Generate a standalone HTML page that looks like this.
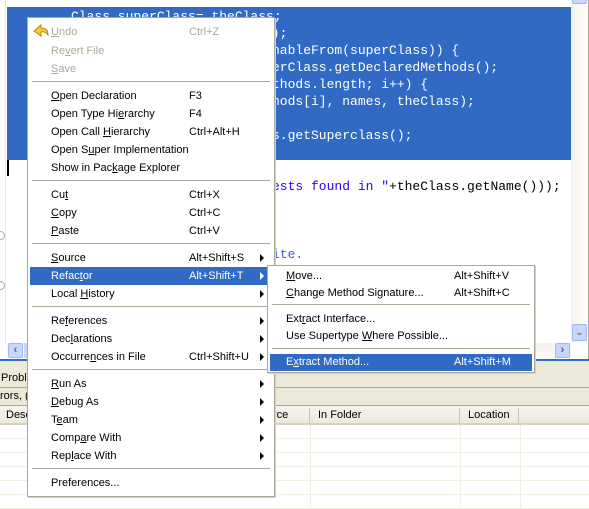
<!DOCTYPE html>
<html><head><meta charset="utf-8"><style>
*{margin:0;padding:0;box-sizing:border-box}
body{width:589px;height:509px;overflow:hidden;background:#fff;position:relative;font-family:"Liberation Sans",sans-serif;font-size:11px;color:#000}
.a{position:absolute}
.code{position:absolute;font-family:"Liberation Mono",monospace;font-size:13px;white-space:pre;line-height:17px}
.menu{position:absolute;background:#fff;border:1px solid #aca899;box-shadow:1px 1px 0 #d4d0c8}
.it{position:absolute;left:0;right:0;height:18px;line-height:18px}
.it .t{position:absolute;left:23px}
.it .k{position:absolute;left:161px}
.it .ar{position:absolute;left:232px;top:5px;width:0;height:0;border-top:4px solid transparent;border-bottom:4px solid transparent;border-left:4px solid #000}
.sep{position:absolute;left:4px;right:4px;height:2px;border-top:1px solid #aca899;border-bottom:1px solid #fff}
.dis{color:#aca899}
.hl{background:#316ac5;color:#fff}
.hl .ar{border-left-color:#fff}
u{text-decoration:underline}
.sub .it{height:17px;line-height:17px}
.sub .it .t{left:18px}
.sub .it .k{left:186px}
</style></head><body>
<div class="a" style="left:0;top:0;width:6px;height:343px;background:#fff;border-right:1px solid #ece9d8"></div>
<div class="a" style="left:7px;top:7px;width:564px;height:153px;background:#316ac5"></div>
<div class="a" style="left:7px;top:160px;width:2px;height:16px;background:#000"></div>
<div class="a" style="left:-4px;top:231px;width:9px;height:9px;border:1px solid #9aa9c4;border-radius:50%"></div>
<div class="a" style="left:-4px;top:281px;width:9px;height:9px;border:1px solid #9aa9c4;border-radius:50%"></div>
<div class="code" style="left:71px;top:8px;color:#fff">Class superClass= theClass;</div>
<div class="code" style="left:264px;top:25px;color:#fff">();</div>
<div class="code" style="left:272px;top:42px;color:#fff">nableFrom(superClass)) {</div>
<div class="code" style="left:272px;top:59px;color:#fff">erClass.getDeclaredMethods();</div>
<div class="code" style="left:272px;top:76px;color:#fff">thods.length; i++) {</div>
<div class="code" style="left:272px;top:93px;color:#fff">hods[i], names, theClass);</div>
<div class="code" style="left:272px;top:127px;color:#fff">s.getSuperclass();</div>
<div class="code" style="left:272px;top:178px"><span style="color:#2a00ff">ests found in "</span>+theClass.getName()));</div>
<div class="code" style="left:272px;top:246px;color:#3f5fbf">ite.</div>
<div class="a" style="left:571px;top:0;width:17px;height:343px;background:linear-gradient(90deg,#f3f1ea,#fdfdfb)"></div>
<div class="a" style="left:588px;top:0;width:1px;height:360px;background:#aca899"></div>
<div class="a" style="left:572px;top:-10px;width:15px;height:14px;background:#c8d6fb;border:1px solid #a4b9ef;border-radius:2px"></div>
<div class="a" style="left:572px;top:324px;width:15px;height:17px;background:#c8d6fb;border:1px solid #a4b9ef;border-radius:2px;color:#4d6185;font-size:10px;text-align:center;line-height:15px">&#8964;</div>
<div class="a" style="left:7px;top:343px;width:564px;height:16px;background:linear-gradient(#f3f1ea,#fdfdfb)"></div>
<div class="a" style="left:8px;top:343px;width:15px;height:15px;background:#c8d6fb;border:1px solid #a4b9ef;border-radius:2px;color:#4d6185;font-weight:bold;text-align:center;line-height:13px">&lsaquo;</div>
<div class="a" style="left:24px;top:343px;width:4px;height:15px;background:#c8d6fb"></div>
<div class="a" style="left:555px;top:343px;width:15px;height:15px;background:#c8d6fb;border:1px solid #a4b9ef;border-radius:2px;color:#4d6185;font-weight:bold;text-align:center;line-height:13px">&rsaquo;</div>
<div class="a" style="left:0;top:359px;width:589px;height:2px;background:#316ac5"></div>
<div class="a" style="left:0;top:361px;width:589px;height:45px;background:#ece9d8"></div>
<div class="a" style="left:0;top:387px;width:589px;height:1px;background:#aca899"></div>
<div class="a" style="left:0;top:405px;width:589px;height:1px;background:#aca899"></div>
<div class="a" style="left:1px;top:372px">Proble</div>
<div class="a" style="left:0;top:390px">rors, (</div>
<div class="a" style="left:0;top:406px;width:589px;height:19px;background:linear-gradient(#f5f4ee,#ebeadb);border-bottom:2px solid #d6d2c2"></div>
<div class="a" style="left:6px;top:409px">Desc</div>
<div class="a" style="left:273px;top:409px">rce</div>
<div class="a" style="left:318px;top:409px">In Folder</div>
<div class="a" style="left:468px;top:409px">Location</div>
<div class="a" style="left:309px;top:408px;width:1px;height:15px;background:#c7c5b2"></div>
<div class="a" style="left:459px;top:408px;width:1px;height:15px;background:#c7c5b2"></div>
<div class="a" style="left:518px;top:408px;width:1px;height:15px;background:#c7c5b2"></div>
<div class="a" style="left:0;top:425px;width:589px;height:84px;background:repeating-linear-gradient(#fff 0,#fff 13px,#f0efe6 13px,#f0efe6 14px)"></div>
<div class="a" style="left:310px;top:425px;width:1px;height:84px;background:#f0efe6"></div>
<div class="a" style="left:460px;top:425px;width:1px;height:84px;background:#f0efe6"></div>
<div class="a" style="left:520px;top:425px;width:1px;height:84px;background:#f0efe6"></div>
<div class="menu" style="left:27px;top:17px;width:248px;height:480px">
<svg class="a" style="left:4px;top:5px" width="18" height="16" viewBox="0 0 18 16"><path d="M2 8 L9 2 L9 5 Q16 5 16 12 Q13 8 9 9 L9 13 Z" fill="#f5c842" stroke="#b8860b" stroke-width="1"/></svg>
<div class="it dis" style="top:5px"><span class="t"><u>U</u>ndo</span><span class="k">Ctrl+Z</span></div>
<div class="it dis" style="top:24px"><span class="t">Re<u>v</u>ert File</span></div>
<div class="it dis" style="top:42px"><span class="t"><u>S</u>ave</span></div>
<div class="sep" style="top:63px"></div>
<div class="it" style="top:69px"><span class="t"><u>O</u>pen Declaration</span><span class="k">F3</span></div>
<div class="it" style="top:87px"><span class="t">Open Type Hi<u>e</u>rarchy</span><span class="k">F4</span></div>
<div class="it" style="top:105px"><span class="t">Open Call <u>H</u>ierarchy</span><span class="k">Ctrl+Alt+H</span></div>
<div class="it" style="top:123px"><span class="t">Open S<u>u</u>per Implementation</span></div>
<div class="it" style="top:141px"><span class="t">Show in Pac<u>k</u>age Explorer</span></div>
<div class="sep" style="top:162px"></div>
<div class="it" style="top:168px"><span class="t">Cu<u>t</u></span><span class="k">Ctrl+X</span></div>
<div class="it" style="top:186px"><span class="t"><u>C</u>opy</span><span class="k">Ctrl+C</span></div>
<div class="it" style="top:204px"><span class="t"><u>P</u>aste</span><span class="k">Ctrl+V</span></div>
<div class="sep" style="top:225px"></div>
<div class="it" style="top:231px"><span class="t"><u>S</u>ource</span><span class="k">Alt+Shift+S</span><span class="ar"></span></div>
<div class="it hl" style="top:249px;left:2px;right:4px"><span class="t" style="left:21px">Refac<u>t</u>or</span><span class="k" style="left:159px">Alt+Shift+T</span><span class="ar" style="left:230px"></span></div>
<div class="it" style="top:267px"><span class="t">Local <u>H</u>istory</span><span class="ar"></span></div>
<div class="sep" style="top:288px"></div>
<div class="it" style="top:294px"><span class="t">Re<u>f</u>erences</span><span class="ar"></span></div>
<div class="it" style="top:312px"><span class="t">Dec<u>l</u>arations</span><span class="ar"></span></div>
<div class="it" style="top:330px"><span class="t">Occurre<u>n</u>ces in File</span><span class="k">Ctrl+Shift+U</span><span class="ar"></span></div>
<div class="sep" style="top:351px"></div>
<div class="it" style="top:357px"><span class="t"><u>R</u>un As</span><span class="ar"></span></div>
<div class="it" style="top:375px"><span class="t"><u>D</u>ebug As</span><span class="ar"></span></div>
<div class="it" style="top:393px"><span class="t">T<u>e</u>am</span><span class="ar"></span></div>
<div class="it" style="top:411px"><span class="t">Comp<u>a</u>re With</span><span class="ar"></span></div>
<div class="it" style="top:429px"><span class="t">Rep<u>l</u>ace With</span><span class="ar"></span></div>
<div class="sep" style="top:450px"></div>
<div class="it" style="top:456px"><span class="t">Preferences...</span></div>
</div>
<div class="menu sub" style="left:267px;top:265px;width:268px;height:108px">
<div class="it" style="top:2px"><span class="t"><u>M</u>ove...</span><span class="k">Alt+Shift+V</span></div>
<div class="it" style="top:19px"><span class="t"><u>C</u>hange Method Signature...</span><span class="k">Alt+Shift+C</span></div>
<div class="sep" style="top:38px"></div>
<div class="it" style="top:45px"><span class="t">Ext<u>r</u>act Interface...</span></div>
<div class="it" style="top:62px"><span class="t">Use Supertype <u>W</u>here Possible...</span></div>
<div class="sep" style="top:82px"></div>
<div class="it hl" style="top:88px;left:2px;right:2px"><span class="t" style="left:16px">E<u>x</u>tract Method...</span><span class="k" style="left:184px">Alt+Shift+M</span></div>
</div>
</body></html>
